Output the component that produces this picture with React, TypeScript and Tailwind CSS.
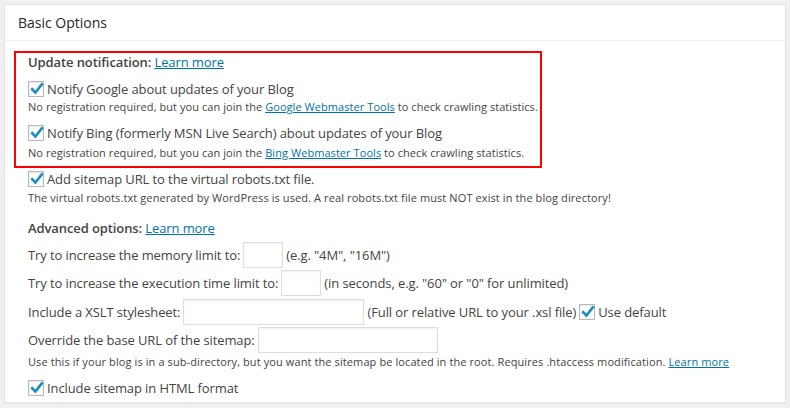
import React from "react";

function Check() {
  return (
    <span className="relative inline-block w-[16px] h-[16px] shrink-0 border border-[#b4b9be] bg-white shadow-[inset_0_1px_2px_rgba(0,0,0,0.1)]">
      <svg viewBox="0 0 16 16" className="absolute left-[0px] top-[-1px] w-[16px] h-[16px]">
        <path d="M3.2 8.2 L6.4 11.6 L12.8 3.4" fill="none" stroke="#1e8cbe" strokeWidth="2.6" strokeLinecap="square" />
      </svg>
    </span>
  );
}

function Field({ w }: { w: string }) {
  return <span className={`inline-block h-[26px] border border-[#ddd] bg-white shadow-[inset_0_1px_2px_rgba(0,0,0,0.07)] ${w}`} />;
}

function Link({ children }: { children: React.ReactNode }) {
  return <a className="text-[#0073aa] underline">{children}</a>;
}

export default function App() {
  return (
    <div
      className="w-[790px] h-[408px] overflow-hidden bg-[#f1f1f1] pt-[4px] pl-[4px] text-[#444]"
      style={{ fontFamily: '"Open Sans", sans-serif' }}
    >
      <div className="w-[782px] h-[399px] bg-white border border-[#e5e5e5] shadow-[0_1px_1px_rgba(0,0,0,0.04)]">
        {/* Header */}
        <div className="h-[36px] border-b border-[#eee] pl-[13px] flex items-center">
          <h3 className="text-[14px] text-[#23282d] leading-[19px]">Basic Options</h3>
        </div>

        <div className="pl-[23px] pt-[10px] text-[13px] tracking-[-0.1px]">
          {/* Update notification */}
          <div className="-ml-[14px] w-[528px] border-2 border-[#ff0000] pl-[12px] pb-[6px]">
            <div className="leading-[18px] font-semibold">
              Update notification: <span className="font-normal"><Link>Learn more</Link></span>
            </div>
            <div className="mt-[9px] flex items-center gap-[3px] leading-[18px]">
              <Check />
              <span>Notify Google about updates of your Blog</span>
            </div>
            <div className="mt-[1px] text-[11px] leading-[15px] tracking-[0.06px] whitespace-nowrap">
              No registration required, but you can join the <Link>Google Webmaster Tools</Link> to check crawling statistics.
            </div>
            <div className="mt-[10px] flex items-center gap-[3px] leading-[18px]">
              <Check />
              <span>Notify Bing (formerly MSN Live Search) about updates of your Blog</span>
            </div>
            <div className="mt-[3px] text-[11px] leading-[15px] tracking-[0.06px] whitespace-nowrap">
              No registration required, but you can join the <Link>Bing Webmaster Tools</Link> to check crawling statistics.
            </div>
          </div>

          <div className="mt-[2px] flex items-center gap-[3px] leading-[18px]">
            <Check />
            <span>Add sitemap URL to the virtual robots.txt file.</span>
          </div>
          <div className="mt-[2px] text-[11px] leading-[15px] tracking-[0.1px] whitespace-nowrap">
            The virtual robots.txt generated by WordPress is used. A real robots.txt file must NOT exist in the blog directory!
          </div>

          <div className="mt-[14px] leading-[18px] font-semibold">
            Advanced options: <span className="font-normal"><Link>Learn more</Link></span>
          </div>

          <div className="mt-[5px] flex items-center gap-[3px] leading-[18px]">
            <span>Try to increase the memory limit to:</span>
            <Field w="w-[40px]" />
            <span>(e.g. "4M", "16M")</span>
          </div>
          <div className="mt-[2px] flex items-center gap-[3px] leading-[18px]">
            <span>Try to increase the execution time limit to:</span>
            <Field w="w-[40px]" />
            <span>(in seconds, e.g. "60" or "0" for unlimited)</span>
          </div>
          <div className="mt-[3px] flex items-center gap-[3px] leading-[18px]">
            <span>Include a XSLT stylesheet:</span>
            <Field w="w-[181px]" />
            <span>(Full or relative URL to your .xsl file)</span>
            <Check />
            <span>Use default</span>
          </div>
          <div className="mt-[2px] flex items-center gap-[3px] leading-[18px]">
            <span>Override the base URL of the sitemap:</span>
            <Field w="w-[180px]" />
          </div>
          <div className="mt-[1px] text-[11px] leading-[15px] tracking-[0.1px] whitespace-nowrap">
            Use this if your blog is in a sub-directory, but you want the sitemap be located in the root. Requires .htaccess modification. <Link>Learn more</Link>
          </div>
          <div className="mt-[10px] flex items-center gap-[3px] leading-[18px]">
            <Check />
            <span>Include sitemap in HTML format</span>
          </div>
        </div>
      </div>
    </div>
  );
}
